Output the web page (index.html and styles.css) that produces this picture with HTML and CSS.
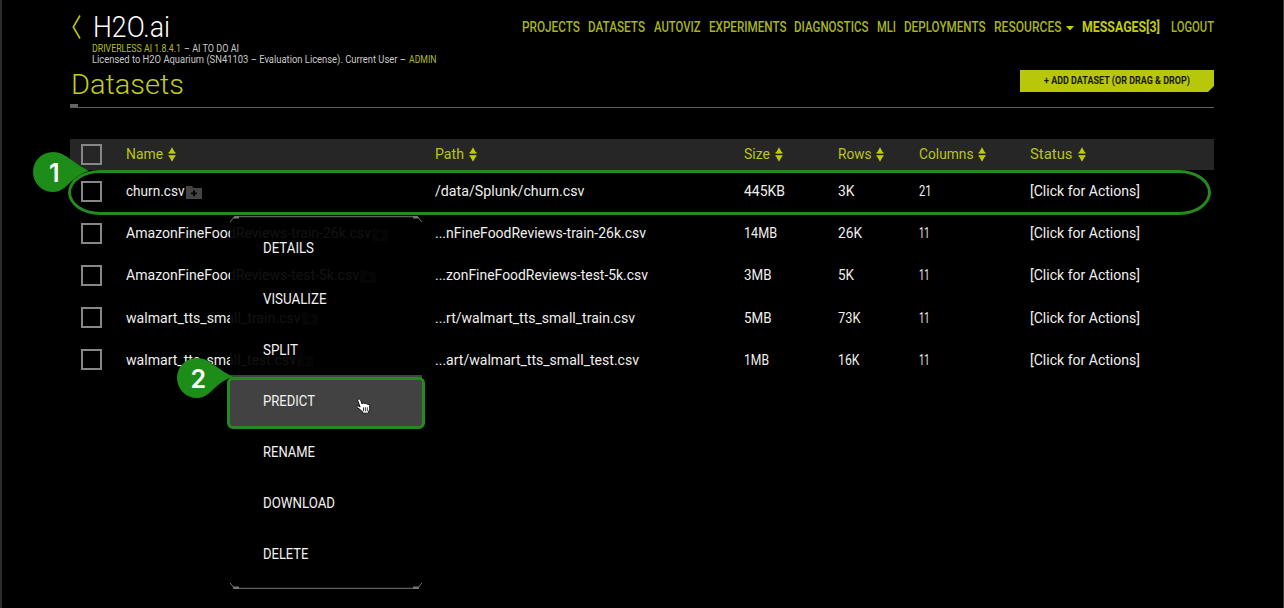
FILE: index.html
```html
<!DOCTYPE html>
<html lang="en">
<head>
<meta charset="utf-8">
<title>Datasets - Driverless AI</title>
<link rel="stylesheet" href="styles.css">
</head>
<body>
<svg class="defs" width="0" height="0">
  <symbol id="sort" viewBox="0 0 8 15"><path d="M4 .3 7.3 6.2H.7zM4 14.7 7.3 8.8H.7z"/><path d="M.5 5.3h7v1.200h-7zM.5 8.300h7v1.200h-7z"/></symbol>
  <symbol id="folder" viewBox="0 0 16 13"><path fill="#444" d="M0 0h6l1.500 2H16v11H0z"/><path stroke="#050505" stroke-width="1.800" d="M8 4.300v6M5 7.300h6"/></symbol>
</svg>
<div class="page">
  <header class="header">
    <svg class="back" viewBox="0 0 9 24"><path d="M8 .5 1.300 12 8 23.500"/></svg>
    <div class="brand">
      <div class="logo"><span data-w="77">H2O.ai</span></div>
      <div class="meta"><span class="accent" data-w="89">DRIVERLESS AI 1.8.4.1</span><span data-w="55">– AI TO DO AI</span></div>
      <div class="meta"><span data-w="314">Licensed to H2O Aquarium (SN41103 – Evaluation License). Current User –</span><span class="accent" data-w="27.5">ADMIN</span></div>
    </div>
    <nav class="nav">
      <a data-w="58">PROJECTS</a><a data-w="57">DATASETS</a><a data-w="46.5">AUTOVIZ</a><a data-w="77.5">EXPERIMENTS</a><a data-w="74.5">DIAGNOSTICS</a><a data-w="19">MLI</a><a data-w="81.5">DEPLOYMENTS</a><a data-w="67.5">RESOURCES</a><svg class="caret" viewBox="0 0 8 5"><path d="M0 0h8L4 4.600z"/></svg><a class="messages" data-w="78">MESSAGES[3]</a><a data-w="43">LOGOUT</a>
    </nav>
  </header>
  <div class="titlebar">
    <h1 class="title"><span data-w="113">Datasets</span></h1>
    <button class="add"><span data-w="146">+ ADD DATASET (OR DRAG &amp; DROP)</span></button>
  </div>
  <div class="rule"></div>
  <main class="table">
    <div class="row head">
      <i class="check"></i>
      <div><span data-w="37">Name</span><svg class="sort"><use href="#sort"/></svg></div>
      <div><span data-w="29">Path</span><svg class="sort"><use href="#sort"/></svg></div>
      <div><span data-w="26">Size</span><svg class="sort"><use href="#sort"/></svg></div>
      <div><span data-w="33.5">Rows</span><svg class="sort"><use href="#sort"/></svg></div>
      <div><span data-w="54.5">Columns</span><svg class="sort"><use href="#sort"/></svg></div>
      <div><span data-w="42.5">Status</span><svg class="sort"><use href="#sort"/></svg></div>
    </div>
    <div class="row">
      <i class="check"></i>
      <div><span data-w="58.5">churn.csv</span><svg class="folder"><use href="#folder"/></svg></div>
      <div><span data-w="149.5">/data/Splunk/churn.csv</span></div>
      <div><span data-w="41">445KB</span></div><div><span data-w="16.5">3K</span></div><div><span data-w="12.5">21</span></div>
      <div><span data-w="110">[Click for Actions]</span></div>
    </div>
    <div class="row">
      <i class="check"></i>
      <div><span data-w="245">AmazonFineFoodReviews-train-26k.csv</span><svg class="folder"><use href="#folder"/></svg></div>
      <div><span data-w="211">...nFineFoodReviews-train-26k.csv</span></div>
      <div><span data-w="33">14MB</span></div><div><span data-w="24">26K</span></div><div><span data-w="10.5">11</span></div>
      <div><span data-w="110">[Click for Actions]</span></div>
    </div>
    <div class="row">
      <i class="check"></i>
      <div><span data-w="233">AmazonFineFoodReviews-test-5k.csv</span><svg class="folder"><use href="#folder"/></svg></div>
      <div><span data-w="213">...zonFineFoodReviews-test-5k.csv</span></div>
      <div><span data-w="27.5">3MB</span></div><div><span data-w="16">5K</span></div><div><span data-w="10.5">11</span></div>
      <div><span data-w="110">[Click for Actions]</span></div>
    </div>
    <div class="row">
      <i class="check"></i>
      <div><span data-w="174.5">walmart_tts_small_train.csv</span><svg class="folder"><use href="#folder"/></svg></div>
      <div><span data-w="200">...rt/walmart_tts_small_train.csv</span></div>
      <div><span data-w="27.5">5MB</span></div><div><span data-w="22.5">73K</span></div><div><span data-w="10.5">11</span></div>
      <div><span data-w="110">[Click for Actions]</span></div>
    </div>
    <div class="row">
      <i class="check"></i>
      <div><span data-w="170">walmart_tts_small_test.csv</span><svg class="folder"><use href="#folder"/></svg></div>
      <div><span data-w="204">...art/walmart_tts_small_test.csv</span></div>
      <div><span data-w="25">1MB</span></div><div><span data-w="21.5">16K</span></div><div><span data-w="10.5">11</span></div>
      <div><span data-w="110">[Click for Actions]</span></div>
    </div>
  </main>
</div>
<div class="menu">
  <svg class="edge" viewBox="0 0 192 6"><path d="M0 6 3 2.500M192 6l-3-3.500M6 .7h180"/><path class="tab" d="M2 2.500 4.500 0H9v2.500zM190 2.500 187.500 0H183v2.500z"/></svg>
  <a><span data-w="51">DETAILS</span></a>
  <a><span data-w="63.5">VISUALIZE</span></a>
  <a><span data-w="35">SPLIT</span></a>
  <a class="active"><span data-w="52">PREDICT</span></a>
  <a><span data-w="52">RENAME</span></a>
  <a><span data-w="72">DOWNLOAD</span></a>
  <a><span data-w="45.5">DELETE</span></a>
  <svg class="edge flip" viewBox="0 0 192 6"><path d="M0 6 3 2.500M192 6l-3-3.500M3 .7h186"/><path class="tab" d="M2 2.500 4.500 0H9v2.500zM190 2.500 187.500 0H183v2.500z"/></svg>
</div>
<div class="ring ring-row"></div>
<div class="ring ring-item"></div>
<div class="pin pin-one"><svg viewBox="0 0 60 40"><path d="M20 0C28 0 33 4 40 9Q47 14.500 56 19Q48 21 40 28C33 34 29 40 20 40A20 20 0 0 1 20 0z"/></svg><b>1</b></div>
<div class="pin pin-two"><svg viewBox="0 0 60 40"><path d="M20 0C28 0 33 4 40 9Q47 14.500 56 19Q48 21 40 28C33 34 29 40 20 40A20 20 0 0 1 20 0z"/></svg><b>2</b></div>
<svg class="cursor" viewBox="0 0 15 17"><path d="M2.300 1.200c1-.6 1.900.1 2.300 1.100L6.200 6l.3-.8c.7-.5 1.500-.2 1.800.6.5-.7 1.500-.6 1.900.2.600-.5 1.500-.3 1.700.5.9-.3 1.600.2 1.700 1.200l.3 3.200-1.200 2.600v1.700H6.600v-1.200L4.200 11.600 1 9.500c-.6-.9.3-1.800 1.300-1.500l1.800 1L1.800 2.800c-.2-.7 0-1.300.5-1.600z" fill="#fff" stroke="#111"/><path d="M7.500 9.300v4M9.400 9.300v4M11.300 9.300v4" stroke="#222" stroke-width=".9"/></svg>
<script src="fit.js"></script>
</body>
</html>
```
FILE: styles.css
```css
* { box-sizing: border-box; }
body {
  margin: 0;
  width: 1284px;
  height: 608px;
  overflow: hidden;
  position: relative;
  background: #000;
  border-left: 2px solid #2c2c2c;
  border-right: 1px solid #3a3a3a;
  color: #efefef;
  font: 15px/18px Roboto, sans-serif;
}
.defs { position: absolute; }
.page { padding: 12px 69px 0 68px; }
.fit { display: inline-block; white-space: nowrap; }
.fit > span { display: inline-block; transform-origin: 0 50%; }
.header { display: flex; height: 54px; }
.back { width: 9px; height: 24px; margin: 3px 0 0 2px; fill: none; stroke: #b9c51a; stroke-width: 1.6; }
.brand { margin-left: 11px; }
.logo { height: 31px; padding-left: 1px; font-size: 30px; line-height: 29px; font-weight: 300; color: #fff; }
.meta { display: flex; gap: 3px; height: 10.500px; font-size: 10px; line-height: 11px; color: #c8c8c8; }
.accent { color: #b0bd1c; }
.nav { display: flex; gap: 8.300px; margin: 6px 0 0 auto; font-size: 14px; font-weight: 500; color: #a9b51c; height: 18px; }
.caret { width: 8px; height: 5px; margin: 8px 0 0 -4.300px; fill: #c3d000; }
.messages { font-weight: 700; color: #c0cc10; margin-right: 2.700px; }
.titlebar { display: flex; justify-content: space-between; height: 38px; }
.title { margin: 2px 0 0 1px; font-size: 28.500px; line-height: 34px; font-weight: 300; color: #c2ce1c; }
.add {
  width: 194px; height: 22px; margin-top: 4px; padding: 0; border: 0;
  background: #b9c70a; color: #191b00; font: 700 10px/22px Roboto, sans-serif;
  clip-path: polygon(0 0, 100% 0, 100% 16px, 188px 100%, 0 100%);
}
.rule { height: 4px; border-bottom: 1px solid #5c5c5c; background: linear-gradient(#666, #666) 0 0 / 8px 3px no-repeat; }
.table { margin-top: 31px; }
.row { display: grid; grid-template-columns: 45px 309px 309px 93.500px 81px 111.500px 1fr; padding-left: 11px; align-items: center; height: 42.200px; }
.row > div { display: flex; align-items: center; }
.head { height: 31px; background: #262626; color: #b8c41c; }
.head .fit { margin-top: -1px; }
.check { width: 21px; height: 21px; border: 2px solid #878787; }
.sort { width: 8px; height: 15px; margin-left: 5px; fill: #bcca10; }
.folder { width: 16px; height: 13px; margin: 2px 0 0 1px; }
.menu { position: absolute; left: 228px; top: 216px; width: 192px; height: 373px; background: rgba(0, 0, 0, .93); display: flex; flex-direction: column; color: #f2f2f2; }
.menu a { height: 51.100px; padding-left: 33px; display: flex; align-items: center; }
.menu .active { background: #424242; }
.edge { width: 192px; height: 6px; fill: none; stroke: #777; }
.edge .tab { fill: #777; stroke: none; }
.flip { transform: scaleY(-1); margin-top: auto; }
.ring { position: absolute; border: 3px solid #258a1f; }
.ring-row { left: 66px; top: 170px; width: 1143px; height: 45px; border-radius: 32px / 22.500px; }
.ring-item { left: 224.500px; top: 377px; width: 198px; height: 52px; border-radius: 6px; }
.pin { position: absolute; width: 60px; height: 40px; }
.pin svg { width: 60px; height: 40px; fill: #1d8c18; display: block; }
.pin b { position: absolute; left: 1px; top: 0; width: 40px; text-align: center; font: 600 25px/42px Inter, sans-serif; color: #fff; }
.pin-one { left: 31.300px; top: 152px; }
.pin-two { left: 175.300px; top: 358px; }
.cursor { position: absolute; left: 354px; top: 398px; width: 15px; height: 17px; fill: none; }
```
FILE: fit.js
```js
// Condense each label horizontally to its design width.
document.querySelectorAll('[data-w]').forEach(function (el) {
  var inner = document.createElement('span');
  inner.textContent = el.textContent;
  el.textContent = '';
  el.classList.add('fit');
  el.appendChild(inner);
  var w = parseFloat(el.dataset.w);
  var k = w / inner.getBoundingClientRect().width;
  inner.style.transform = 'scaleX(' + k + ')';
  el.style.width = w + 'px';
});
```
